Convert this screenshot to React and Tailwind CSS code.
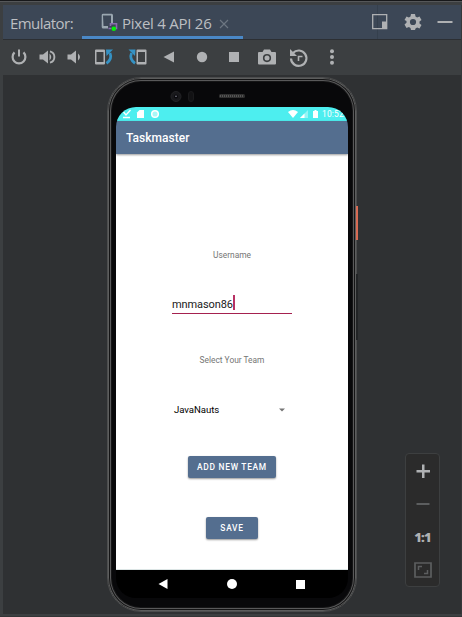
import React from 'react';

const Icon = ({ className = '', children }) => (
  <svg viewBox="0 0 22 22" fill="#afb1b3" className={'h-[22px] w-[22px] shrink-0 ' + className}>
    {children}
  </svg>
);

function TabBar() {
  return (
    <header className="flex h-[35px] shrink-0 border-b border-[#2c2f33] bg-[#3c4756] text-[15px] text-[#bcbfc2]">
      <div className="w-[79px] pl-[7px] pt-[6px] leading-[25px] tracking-[-0.55px]">Emulator:</div>
      <div className="flex h-[34px] w-[161px] border-b-[3px] border-[#4a88c7] pl-[19px] pt-[6px]">
        <svg viewBox="0 0 20 22" className="mt-[2px] h-[22px] w-[20px] shrink-0">
          <path d="M2 2.500h8v8h2V2.500Q12 .7 10.700 .7H2.300Q.700 .7 .700 2V14Q.700 15.500 2.300 15.500H7V13H2.500Z" fill="#9aa7b0" />
          <path d="M9.500 13V10.800h6V15.500H13" fill="none" stroke="#8b6bb0" strokeWidth="1.6" />
          <path d="M7.500 15.500h3" stroke="#8b6bb0" strokeWidth="1.5" />
          <circle cx="12.800" cy="15.800" r="2.300" fill="#05ef08" />
        </svg>
        <span className="ml-px whitespace-nowrap leading-[25px] tracking-[-0.25px]">Pixel 4 API 26</span>
        <svg viewBox="0 0 10 10" className="ml-auto mr-[14px] mt-[8px] h-[10px] w-[10px] shrink-0">
          <path d="M1 1l8 8M9 1L1 9" stroke="#6d7782" strokeWidth="1.1" />
        </svg>
      </div>
      <div className="flex flex-1 justify-end">
        <div className="flex w-[84px] border-l border-[#35404d]" />
        <div className="-ml-[92px] flex w-[92px] pt-[6px]">
          <Icon>
            <path d="M3.700 3.700h14v14h-14z" fill="none" stroke="#afb1b3" strokeWidth="1.3" />
            <path d="M13 10.500h5v7.500h-5z" />
          </Icon>
          <Icon className="ml-[11px]">
            <path fillRule="evenodd" d="M9 3h4l.5 2.500 1.600.9 2.400-.9 2 3.500-2 1.600v1.800l2 1.600-2 3.500-2.400-.9-1.600.9L13 19H9l-.5-2.100-1.600-.9-2.400.9-2-3.500 2-1.600v-1.800L2.500 9l2-3.500 2.400.9 1.600-.9ZM11 7.900a3.100 3.100 0 1 0 0 6.200a3.100 3.100 0 0 0 0-6.200Z" />
          </Icon>
          <Icon className="ml-[10px]"><path d="M3.500 10h15v2h-15z" /></Icon>
        </div>
      </div>
    </header>
  );
}

function Toolbar() {
  return (
    <div className="flex h-[35px] shrink-0 items-center bg-[#3c3f41] pb-px pl-[5px]">
      <Icon>
        <path d="M10 3.500h2v7h-2z" />
        <path d="M6.500 6.400a6.400 6.400 0 1 0 9 0" fill="none" stroke="#afb1b3" strokeWidth="2.200" />
      </Icon>
      <Icon className="ml-[7px]">
        <path d="M2.500 8.500h3.500L11 4.500v13L6 13.500H2.500z" />
        <path d="M12.500 7.500q3.500 3.500 0 7z" />
        <path d="M13 5.300a5.900 5.900 0 0 1 0 11.400" fill="none" stroke="#afb1b3" strokeWidth="1.900" />
      </Icon>
      <Icon className="ml-[4px]">
        <path d="M4.500 8.500h3.500L13 4.500v13L8 13.500H4.500z" />
        <path d="M15 7.500q4 3.500 0 7z" />
      </Icon>
      <Icon className="ml-[8px]">
        <path fillRule="evenodd" d="M3 3.500h8q1 0 1 1v13q0 1-1 1H3q-1 0-1-1v-13q0-1 1-1zM3.500 6v10h7V6z" />
        <path d="M13.500 17.300Q19.500 13 17 7" fill="none" stroke="#3592c4" strokeWidth="2.700" />
        <path d="M13 3.500h7L13.500 10z" fill="#3592c4" />
      </Icon>
      <Icon className="ml-[11px]">
        <path fillRule="evenodd" d="M11.500 3.500h8q1 0 1 1v13q0 1-1 1h-8q-1 0-1-1v-13q0-1 1-1zM12 6v10h7V6z" />
        <path d="M9 17.300Q3 13 5.500 7" fill="none" stroke="#3592c4" strokeWidth="2.700" />
        <path d="M9.500 3.500h-7L9 10z" fill="#3592c4" />
      </Icon>
      <Icon className="ml-[10px]"><path d="M16 5.500v11L5.500 11z" /></Icon>
      <Icon className="ml-[11px]"><circle cx="11" cy="11" r="5.200" /></Icon>
      <Icon className="ml-[10px]"><path d="M6 6h10v10H6z" /></Icon>
      <Icon className="ml-[11px]">
        <path fillRule="evenodd" d="M8 3.500h6L15.500 6h3.500q1 0 1 1V17.500q0 1-1 1H3q-1 0-1-1V7q0-1 1-1h3.500zM11 8a4.100 4.100 0 1 0 0 8.200a4.100 4.100 0 0 0 0-8.200z" />
        <circle cx="11" cy="12.100" r="2.500" />
      </Icon>
      <Icon className="ml-[10px]">
        <path d="M5 7a7.700 7.700 0 1 1-2 5.500" fill="none" stroke="#afb1b3" strokeWidth="2.200" />
        <path d="M2 3v7h7z" />
        <path d="M10.500 15v-4.500h4" fill="none" stroke="#afb1b3" strokeWidth="1.600" />
      </Icon>
      <Icon className="ml-[11px]">
        <circle cx="11" cy="5.300" r="2" />
        <circle cx="11" cy="11" r="2" />
        <circle cx="11" cy="16.700" r="2" />
      </Icon>
    </div>
  );
}

function PhoneScreen() {
  return (
    <div className="flex h-[491px] w-[232px] flex-col overflow-hidden rounded-[20px] bg-black font-[Roboto,sans-serif]">
      <div className="flex h-[14px] shrink-0 items-center bg-[#4deeef] text-white">
        <svg viewBox="0 0 50 14" fill="white" className="h-[14px] w-[50px]">
          <path d="M7 10.500h7M7.500 5l2.500 3L14.500 3" fill="none" stroke="white" strokeWidth="1.300" />
          <path d="M23.500 3h4.500v8h-7V5.500z" />
          <circle cx="39" cy="7" r="3.300" fill="#a8f7f7" stroke="white" strokeWidth="1.500" />
        </svg>
        <svg viewBox="0 0 34 14" fill="white" className="ml-[121px] h-[14px] w-[34px]">
          <path d="M1 5Q6 1 11 5L6 11z" />
          <path d="M21 3v8h-8z" opacity=".4" />
          <path d="M17.500 6.500V11H13z" />
          <path d="M26 4h1.500V3h2v1H31v7h-5z" />
        </svg>
        <span className="ml-px whitespace-nowrap text-[8.400px] leading-[15px] tracking-[0.2px]">10:52</span>
      </div>
      <div className="z-10 h-[33px] shrink-0 bg-[#546e8f] pl-[10px] text-[12px] font-medium leading-[35px] tracking-[0.02px] text-white shadow-[0_1px_2px_rgba(0,0,0,0.4)]">
        Taskmaster
      </div>
      <main className="flex h-[416px] shrink-0 flex-col items-center border-b border-[#dce5e5] bg-white">
        <div className="mt-[95px] text-[8.400px] leading-[12px] text-[#757575]">Username</div>
        <div className="mt-[34px] flex h-[19px] w-[120px] items-start border-b border-[#a5214f]">
          <span className="pt-[3px] text-[11px] leading-[14px] tracking-[-0.1px] text-[#202020]">mnmason86</span>
          <span className="h-[15px] w-[2px] bg-[#b83264]" />
        </div>
        <div className="mt-[40px] text-[8.400px] leading-[12px] text-[#757575]">Select Your Team</div>
        <div className="mt-[37px] flex h-[14px] w-[120px] items-center pl-[2px] pr-[7px]">
          <span className="text-[9.600px] leading-[14px] tracking-[-0.05px] text-black">JavaNauts</span>
          <svg viewBox="0 0 6 4" className="ml-auto h-[4px] w-[6px]"><path d="M0 .5h6L3 3.500z" fill="#757575" /></svg>
        </div>
        <button className="mt-[39px] h-[22px] w-[88px] shrink-0 whitespace-nowrap rounded-[2px] bg-[#546e8f] text-[8.400px] font-medium leading-[22px] tracking-[0.72px] text-white shadow-[0_1px_2px_rgba(0,0,0,0.4)]">ADD NEW TEAM</button>
        <button className="mt-[39px] h-[22px] w-[52px] shrink-0 rounded-[2px] bg-[#546e8f] text-[8.400px] font-medium leading-[22px] tracking-[0.72px] text-white shadow-[0_1px_2px_rgba(0,0,0,0.4)]">SAVE</button>
      </main>
      <nav className="flex h-[28px] shrink-0 items-center justify-between pl-[42px] pr-[43px]">
        <svg viewBox="0 0 10 10" className="h-[10px] w-[10px]"><path d="M9.500 0v10L.5 5z" fill="white" /></svg>
        <span className="h-[10px] w-[10px] rounded-full bg-white" />
        <span className="h-[9px] w-[9px] bg-white" />
      </nav>
    </div>
  );
}

function Phone() {
  return (
    <div className="relative ml-[104px] mt-[2px] h-[535px] w-[250px] rounded-[34px] border border-[#4c4d4e] bg-[#08080a] shadow-[inset_0_0_0_1px_#5c5d5d,inset_0_0_0_2px_#151516,inset_0_0_0_3px_#59595a,inset_0_0_0_4px_#151516]">
      <div className="flex h-[29px] items-start pl-[62px] pt-[13px]">
        <svg viewBox="0 0 80 12" className="h-[12px] w-[80px]">
          <circle cx="6" cy="5.500" r="5" fill="#19191c" stroke="#232326" />
          <circle cx="6" cy="5.500" r="2" fill="#08080c" />
          <circle cx="6" cy="5.200" r=".8" fill="#8d8b9a" />
          <rect x="18.500" y=".5" width="5" height="10" rx="2.500" fill="#121214" stroke="#1a1a1c" />
          <rect x="49" y="3" width="26" height="4" rx="1.500" fill="#303030" />
          <path d="M50 5h24" stroke="#565656" strokeWidth="2" strokeDasharray="1 1" />
        </svg>
      </div>
      <div className="pl-[8px]"><PhoneScreen /></div>
      <span className="absolute -right-[2px] top-[128px] h-[34px] w-[2px] bg-[#d76b54]" />
      <span className="absolute -right-[2px] top-[196px] h-[66px] w-[2px] bg-[#222426]" />
    </div>
  );
}

function ZoomControls() {
  return (
    <div className="ml-[48px] mt-[378px] flex h-[134px] w-[35px] flex-col items-center rounded-[4px] border border-[#3d3f40] bg-[#2b2b2b] pt-[6px]">
      <Icon><path d="M10 4.500h2.500V10H18v2.500h-5.500v5.500H10v-5.500H4.500V10H10z" /></Icon>
      <Icon className="mt-[11px]"><path d="M4.500 10h13v2h-13z" fill="#5c5e5f" /></Icon>
      <div className="mt-[11px] h-[22px] font-['Open_Sans',sans-serif] text-[13px] font-extrabold leading-[22px] tracking-[-0.9px] text-[#afb1b3]">1:1</div>
      <Icon className="mt-[11px]">
        <path d="M3 4h16v14H3z" fill="none" stroke="#5c5e5f" strokeWidth="1.700" />
        <path d="M6.500 11V7.500H10M12 14.500h3.500V11" fill="none" stroke="#5c5e5f" strokeWidth="1.500" />
      </Icon>
    </div>
  );
}

export default function App() {
  return (
    <div className="flex h-[617px] w-[462px] flex-col overflow-hidden border-t border-[#17181a] bg-[#3c3f41] font-['Open_Sans',sans-serif]">
      <div className="h-[4px] shrink-0 border-t border-[#555759]" />
      <div className="ml-[3px] flex w-[459px] flex-col border-r border-[#35383a]">
        <TabBar />
        <Toolbar />
        <div className="flex h-[539px] items-start bg-[#2f3133]">
          <Phone />
          <ZoomControls />
        </div>
      </div>
      <div className="h-[3px] shrink-0 border-b border-[#333536]" />
    </div>
  );
}
